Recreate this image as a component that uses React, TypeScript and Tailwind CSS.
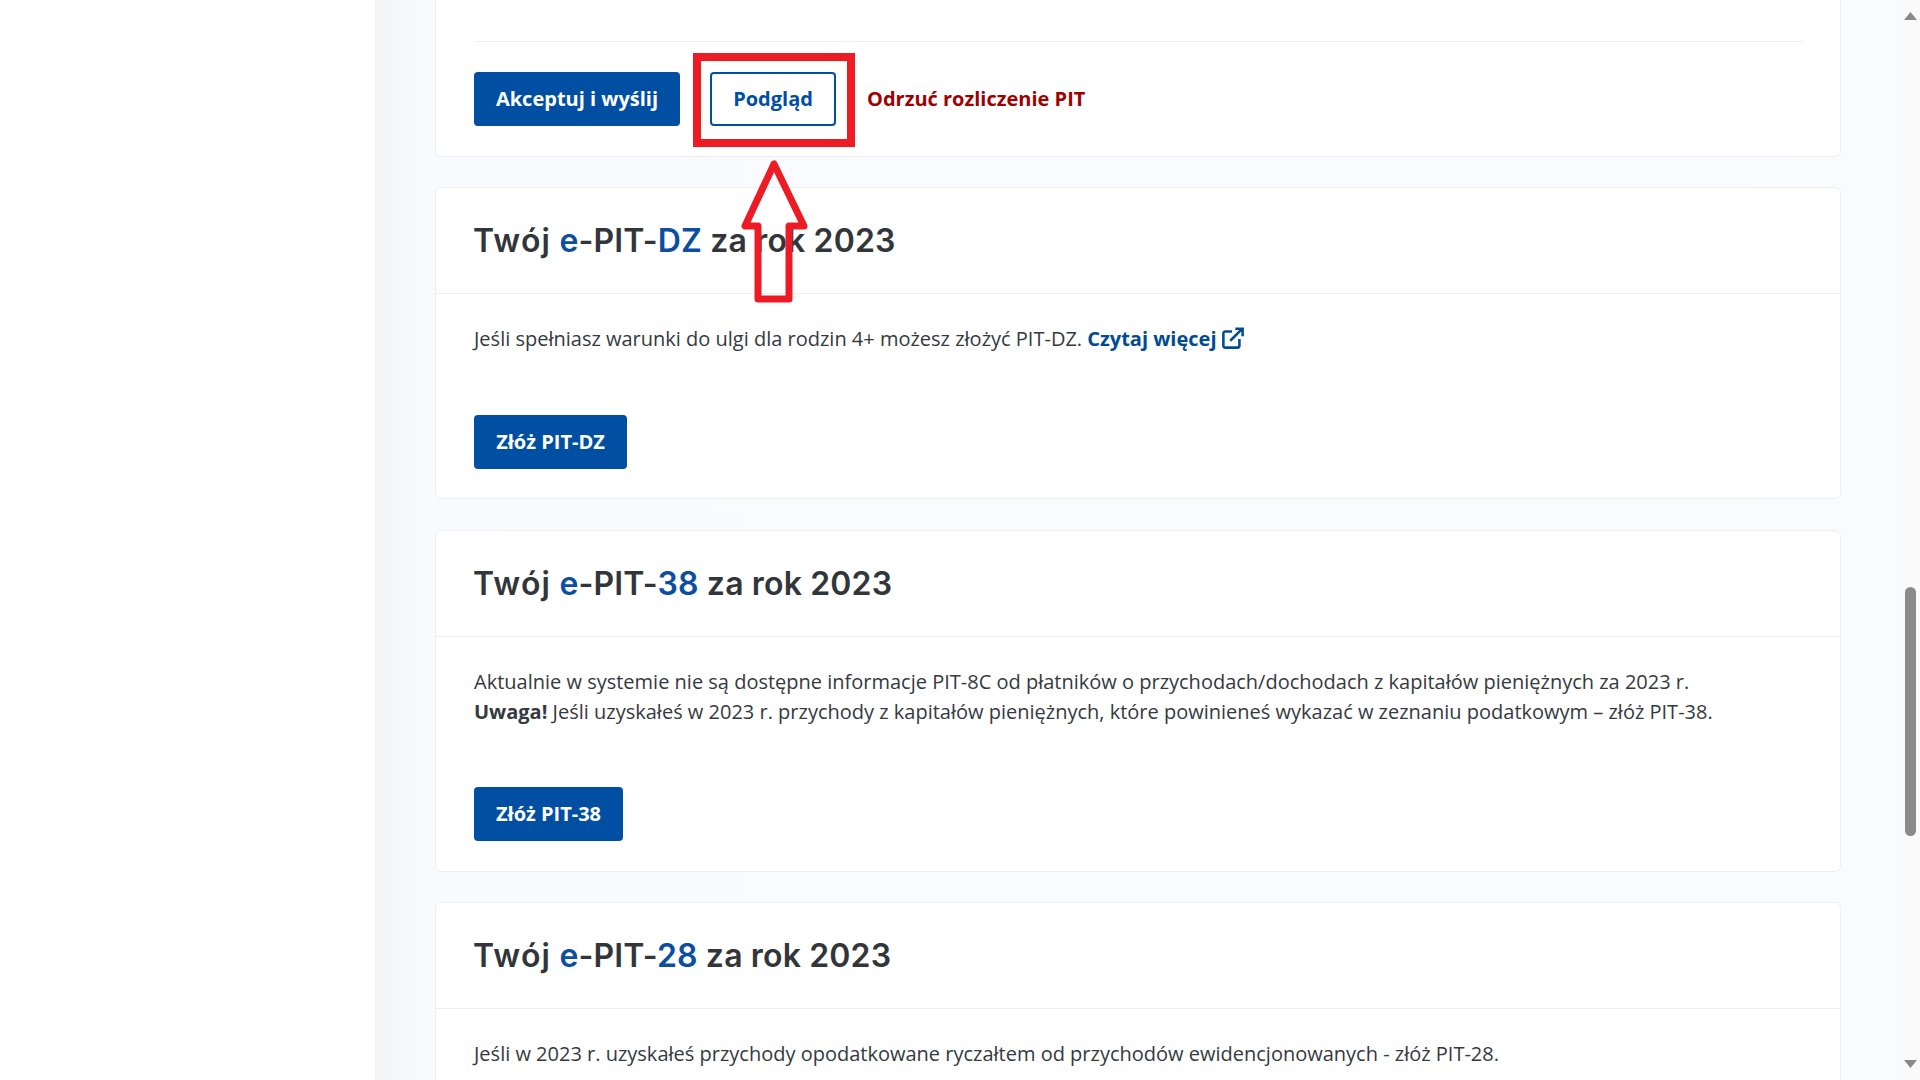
const btnPrimary =
  "flex items-center justify-center h-[54px] rounded-[4px] bg-[#004fa3] text-white text-[20px] font-bold [font-family:'Open_Sans',sans-serif]"

function CardTitle({ accent }: { accent: string }) {
  return (
    <div className="flex items-center h-[106px] px-[37px] border-b border-[#edeff3]">
      <h2 className="text-[32px] font-semibold tracking-[0.15px] text-[#32363b] [font-family:'Inter',sans-serif]">
        <span className="tracking-[1.2px]">Twój</span> <span className="text-[#0c4e9f]">e</span>-PIT-<span className="text-[#0c4e9f]">{accent}</span> za rok 2023
      </h2>
    </div>
  )
}

export default function App() {
  return (
    <div className="relative flex h-screen overflow-hidden bg-white [font-family:'Open_Sans',sans-serif] text-[20px] text-[#343a40]">
      {/* Sidebar */}
      <div className="w-[375px] flex-shrink-0 bg-white" />

      {/* Main */}
      <div className="flex-1 min-w-0 pl-[60px] pr-[60px] bg-[#fafbfe] bg-gradient-to-r from-[#f3f4f6] via-[#f9fafd] via-[3%] to-[#fafbfe]">
        {/* Card 1, cut off by the top of the window */}
        <div className="h-[157px] bg-white border border-t-0 border-[#edeff3] rounded-b-[6px] px-[38px] pt-[41px]">
          <div className="border-t border-[#edeff3] pt-[30px] flex items-center">
            <button className={`${btnPrimary} w-[206px]`}>Akceptuj i wyślij</button>
            <button className="ml-[30px] flex items-center justify-center w-[126px] h-[54px] rounded-[4px] border-2 border-[#004fa3] bg-white text-[#004fa3] text-[20px] font-bold">
              Podgląd
            </button>
            <a className="ml-[31px] text-[#a00000] font-bold">Odrzuć rozliczenie PIT</a>
          </div>
        </div>

        {/* PIT-DZ */}
        <div className="mt-[30px] h-[312px] bg-white border border-[#edeff3] rounded-[6px]">
          <CardTitle accent="DZ" />
          <div className="px-[38px] pt-[30px]">
            <p className="h-[30px] leading-[30px]">
              Jeśli spełniasz warunki do ulgi dla rodzin 4+ możesz złożyć PIT-DZ.{' '}
              <a className="font-bold text-[#004c93]">
                Czytaj więcej
                <svg
                  className="inline-block align-[-3px] ml-[5px] w-[22px] h-[22px]"
                  viewBox="0 0 24 24"
                  fill="none"
                  stroke="currentColor"
                  strokeWidth="2.8"
                >
                  <path d="M19 13v7.5a2 2 0 0 1-2 2H3.5a2 2 0 0 1-2-2V7a2 2 0 0 1 2-2H11" />
                  <path d="M9 15L21.5 2.5M14.5 2h8v8" />
                </svg>
              </a>
            </p>
            <button className={`${btnPrimary} w-[153px] mt-[61px]`}>Złóż PIT-DZ</button>
          </div>
        </div>

        {/* PIT-38 */}
        <div className="mt-[31px] h-[342px] bg-white border border-[#edeff3] rounded-[6px]">
          <CardTitle accent="38" />
          <div className="px-[38px] pt-[30px]">
            <p className="leading-[30px]">
              Aktualnie w systemie nie są dostępne informacje PIT-8C od płatników o przychodach/dochodach z kapitałów pieniężnych za 2023 r.
              <br />
              <b>Uwaga!</b> Jeśli uzyskałeś w 2023 r. przychody z kapitałów pieniężnych, które powinieneś wykazać w zeznaniu podatkowym – złóż PIT-38.
            </p>
            <button className={`${btnPrimary} w-[149px] mt-[60px]`}>Złóż PIT-38</button>
          </div>
        </div>

        {/* PIT-28 */}
        <div className="mt-[30px] h-[300px] bg-white border border-[#edeff3] rounded-[6px]">
          <CardTitle accent="28" />
          <div className="px-[38px] pt-[30px]">
            <p className="leading-[30px]">
              Jeśli w 2023 r. uzyskałeś przychody opodatkowane ryczałtem od przychodów ewidencjonowanych - złóż PIT-28.
            </p>
          </div>
        </div>
      </div>

      {/* Scrollbar */}
      <div className="w-[19px] flex-shrink-0 bg-[#fafafa] flex flex-col items-center">
        <svg className="mt-[12px]" width="13" height="8" viewBox="0 0 13 8">
          <path d="M6.5 0L13 8H0z" fill="#8a8a8a" />
        </svg>
        <div className="mt-[567px] w-[11px] h-[249px] rounded-full bg-[#8a8a8a]" />
        <svg className="mt-[224px]" width="13" height="8" viewBox="0 0 13 8">
          <path d="M0 0H13L6.5 8z" fill="#8a8a8a" />
        </svg>
      </div>

      {/* Red annotation drawn over the page */}
      <div className="absolute left-[693px] top-[53px] w-[162px] h-[94px] border-[8px] border-[#ed1c24]" />
      <svg className="absolute left-[735px] top-[155px]" width="80" height="150" viewBox="0 0 80 150">
        <path
          d="M39 9L10 71H23V144H54V71H69Z"
          fill="none"
          stroke="#ed1c24"
          strokeWidth="7"
          strokeLinejoin="round"
        />
      </svg>
    </div>
  )
}
